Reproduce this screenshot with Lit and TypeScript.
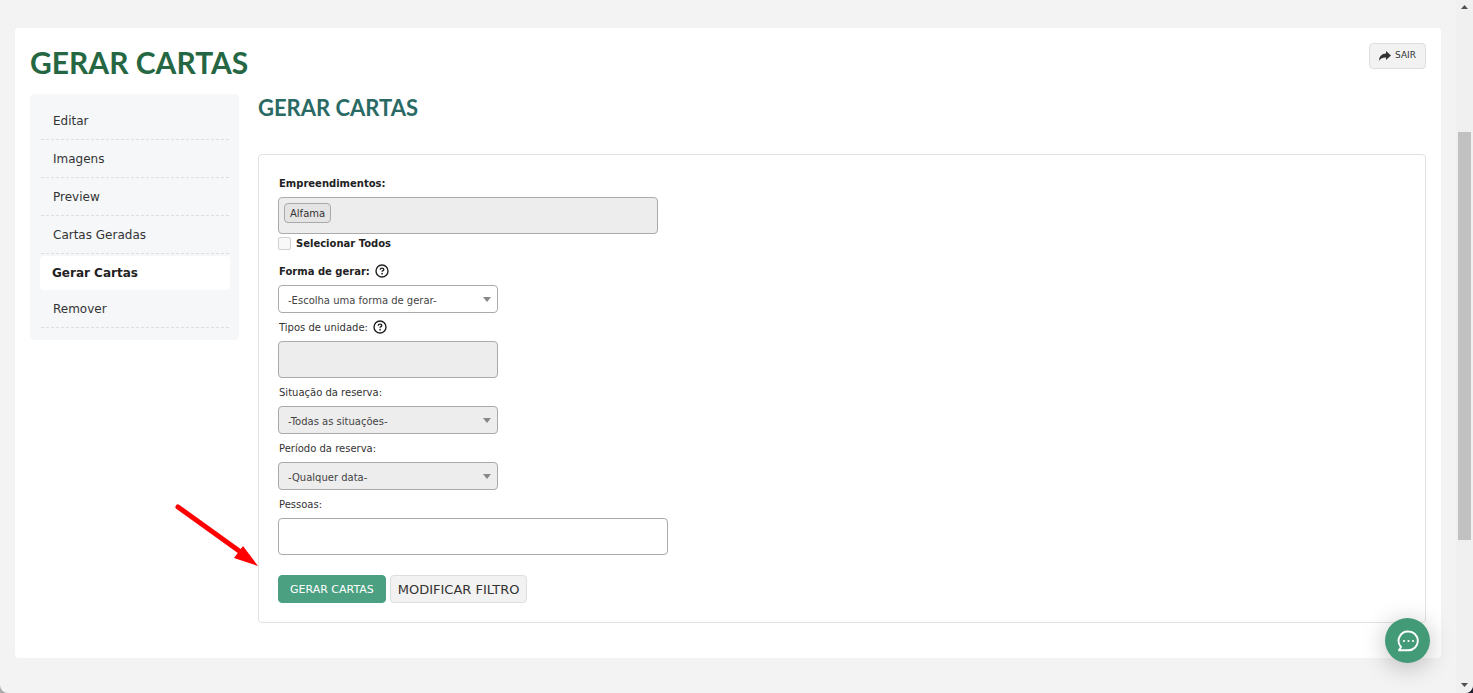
import { LitElement, html, css, svg, nothing } from "lit";
import { customElement, property } from "lit/decorators.js";

const helpIcon = html`<svg class="help" viewBox="0 0 14 14" role="img" aria-label="Ajuda">
  <circle cx="7" cy="7" r="6" fill="none" stroke="#222" stroke-width="1.4" />
  <path d="M5.2 5.7C5.2 4.7 6 4.100 7 4.100s1.800.6 1.800 1.500c0 1.100-1.700 1.100-1.700 2.200" fill="none" stroke="#222" stroke-width="1.4" />
  <circle cx="7.1" cy="9.700" r=".85" fill="#222" />
</svg>`;

@customElement("side-menu")
export class SideMenu extends LitElement {
  @property({ attribute: false }) items: string[] = [];
  @property() current = "";

  static styles = css`
    :host {
      display: block;
      background: #f5f7f9;
      border-radius: 4px;
      padding: 8px 9px 12px 10px;
      box-sizing: border-box;
    }
    .list {
      display: flex;
      flex-direction: column;
      list-style: none;
      margin: 0;
      padding: 0;
    }
    .link {
      display: block;
      margin: 0 1px;
      padding: 1px 12px 0;
      border-bottom: 1px dashed #dcdfe2;
      font-size: 12px;
      line-height: 36px;
      color: #333;
      text-decoration: none;
    }
    .current {
      margin: 2px 0 0;
      padding: 0 12px;
      border: 0;
      border-radius: 4px;
      background: #fff;
      font-weight: bold;
      line-height: 34px;
      color: #222;
    }
  `;

  render() {
    return html`<ul class="list">
      ${this.items.map(
        (item) => html`<li>
          <a
            class="link ${item === this.current ? "current" : ""}"
            href="#"
            aria-current=${item === this.current ? "page" : nothing}
            >${item}</a
          >
        </li>`
      )}
    </ul>`;
  }
}

@customElement("app-root")
export class AppRoot extends LitElement {
  static styles = css`
    :host {
      display: block;
      font-family: Verdana, "DejaVu Sans", sans-serif;
      color: #333;
      background: linear-gradient(to right, #aaa 50%, #223 50%);
    }
    .window {
      display: flex;
      min-height: 100vh;
      background: #f3f3f3;
      border-radius: 0 0 8px 8px;
      overflow: hidden;
    }
    .page {
      flex: 1;
      min-width: 0;
      padding: 28px 15px 35px;
    }
    .panel {
      background: #fff;
      border-radius: 4px;
      padding: 15px 15px 35px;
    }
    .header {
      display: flex;
      justify-content: space-between;
      align-items: flex-start;
      height: 51px;
    }
    .title,
    .subtitle {
      margin: 0;
      font-family: Lato, sans-serif;
      font-weight: bold;
    }
    .title {
      font-size: 30px;
      line-height: 38px;
      color: #266743;
    }
    .subtitle {
      font-size: 22px;
      line-height: 27px;
      padding-bottom: 33px;
      color: #2a6a64;
    }
    .btn {
      box-sizing: border-box;
      border: 1px solid #dedede;
      border-radius: 4px;
      background: #f2f2f2;
      color: #333;
      font-family: inherit;
      font-size: 13px;
      height: 28px;
      padding: 0 7px;
    }
    .exit {
      display: flex;
      align-items: center;
      gap: 4px;
      height: 26px;
      font-size: 9px;
      padding: 0 9px 2px;
    }
    .exit-icon {
      width: 12px;
      height: 10px;
      padding-top: 2px;
    }
    .primary {
      border-color: #4ba081;
      background: #4ba081;
      color: #fff;
      font-size: 11px;
      padding: 0 11px;
    }
    .body {
      display: grid;
      grid-template-columns: 209px minmax(0, 1fr);
      gap: 19px;
      align-items: start;
    }
    .form {
      border: 1px solid #e2e2e2;
      border-radius: 4px;
      padding: 14px 19px 19px;
      font-size: 10px;
    }
    .label {
      display: flex;
      align-items: center;
      gap: 5px;
      height: 28px;
      padding-left: 1px;
    }
    .strong {
      font-weight: bold;
      color: #222;
    }
    .help {
      width: 14px;
      height: 14px;
    }
    .box,
    .select {
      box-sizing: border-box;
      width: 100%;
      border: 1px solid #aaa;
      border-radius: 4px;
      background: #fff;
      font-family: inherit;
      font-size: 10px;
      color: #444;
    }
    .box {
      display: flex;
      align-items: flex-start;
      height: 37px;
      padding: 5px;
    }
    .narrow {
      max-width: 220px;
    }
    .medium {
      max-width: 380px;
    }
    .wide {
      max-width: 390px;
    }
    .off {
      background: #ededed;
    }
    .entry {
      flex: 1;
      min-width: 0;
      border: 0;
      padding: 0;
      background: none;
      font: inherit;
    }
    .chip {
      box-sizing: border-box;
      height: 20px;
      line-height: 19px;
      padding: 0 5px;
      border: 1px solid #aaa;
      border-radius: 4px;
      background: #e4e4e4;
      color: #333;
    }
    .picker {
      display: grid;
      align-items: center;
    }
    .picker > * {
      grid-area: 1 / 1;
    }
    .select {
      appearance: none;
      height: 28px;
      padding: 2px 24px 0 9px;
      opacity: 1;
    }
    .caret {
      justify-self: end;
      width: 8px;
      height: 5px;
      margin-right: 7px;
      pointer-events: none;
    }
    .check-row {
      display: flex;
      align-items: center;
      gap: 5px;
      height: 19px;
      margin-bottom: 4px;
    }
    .check {
      appearance: none;
      box-sizing: border-box;
      width: 13px;
      height: 13px;
      margin: 0;
      border: 1px solid #d0d0d0;
      border-radius: 2px;
      background: #f8f8f8;
    }
    .actions {
      display: flex;
      flex-wrap: wrap;
      gap: 4px;
      margin-top: 20px;
    }
    .scroll {
      display: flex;
      flex-direction: column;
      align-items: center;
      justify-content: space-between;
      width: 17px;
      background: #f0f0f0;
    }
    .track {
      flex: 1;
      display: grid;
      grid-template-rows: 117fr 408fr 138fr;
      width: 13px;
    }
    .thumb {
      grid-row: 2;
      background: #c1c1c1;
    }
    .step {
      width: 7px;
      height: 4px;
      padding: 5px 0 6px;
    }
    .chat {
      position: fixed;
      right: 43px;
      bottom: 30px;
      display: grid;
      place-items: center;
      width: 45px;
      height: 45px;
      border: 0;
      border-radius: 50%;
      padding: 0;
      background: #429a77;
      box-shadow: 0 4px 24px rgba(0, 0, 0, 0.25);
    }
    .chat-icon {
      width: 22px;
      height: 22px;
    }
    .arrow {
      position: absolute;
      left: 174px;
      top: 503px;
      width: 86px;
      height: 65px;
      pointer-events: none;
    }
  `;

  private picker(id: string, label: unknown, option: string, off = false) {
    return html`${label}
      <div class="picker narrow">
        <select class="select ${off ? "off" : ""}" id=${id}>
          <option>${option}</option>
        </select>
        <svg class="caret" viewBox="0 0 8 5" aria-hidden="true">
          <path d="M0 0h8L4 5z" fill="#888" />
        </svg>
      </div>`;
  }

  render() {
    return html`
      <div class="window">
        <div class="page">
          <main class="panel">
            <header class="header">
              <h1 class="title">GERAR CARTAS</h1>
              <button class="btn exit" type="button">
                <svg class="exit-icon" viewBox="0 0 12 10" aria-hidden="true">
                  <path d="M7 0l5 4.400L7 9V6.500C3.800 6.400 1.600 7.100.2 9.800-.2 5.700 2.600 2.500 7 2.400z" fill="#333" />
                </svg>
                SAIR
              </button>
            </header>
            <div class="body">
              <side-menu
                .items=${["Editar", "Imagens", "Preview", "Cartas Geradas", "Gerar Cartas", "Remover"]}
                current="Gerar Cartas"
              ></side-menu>
              <section>
                <h2 class="subtitle">GERAR CARTAS</h2>
                <form class="form" @submit=${(e: Event) => e.preventDefault()}>
                  <label class="label strong" for="places">Empreendimentos:</label>
                  <div class="box medium off">
                    <span class="chip">Alfama</span>
                    <input class="entry" id="places" disabled />
                  </div>
                  <div class="check-row">
                    <input class="check" type="checkbox" id="all" />
                    <label class="strong" for="all">Selecionar Todos</label>
                  </div>
                  ${this.picker(
                    "mode",
                    html`<label class="label strong" for="mode">Forma de gerar: ${helpIcon}</label>`,
                    "-Escolha uma forma de gerar-"
                  )}
                  <label class="label" for="types">Tipos de unidade: ${helpIcon}</label>
                  <input class="box narrow off" id="types" disabled />
                  ${this.picker(
                    "status",
                    html`<label class="label" for="status">Situação da reserva:</label>`,
                    "-Todas as situações-",
                    true
                  )}
                  ${this.picker(
                    "period",
                    html`<label class="label" for="period">Período da reserva:</label>`,
                    "-Qualquer data-",
                    true
                  )}
                  <label class="label" for="people">Pessoas:</label>
                  <input class="box wide" id="people" />
                  <div class="actions">
                    <button class="btn primary" type="submit">GERAR CARTAS</button>
                    <button class="btn" type="button">MODIFICAR FILTRO</button>
                  </div>
                </form>
              </section>
            </div>
          </main>
        </div>
        <div class="scroll" aria-hidden="true">
          <svg class="step" viewBox="0 0 7 4"><path d="M0 4h7L3.500 0z" fill="#505050" /></svg>
          <div class="track"><div class="thumb"></div></div>
          <svg class="step" viewBox="0 0 7 4"><path d="M0 0h7L3.500 4z" fill="#505050" /></svg>
        </div>
      </div>
      <svg class="arrow" viewBox="0 0 86 65" aria-hidden="true">
        <path d="M4 4L68 50" stroke="#f00" stroke-width="5" stroke-linecap="round" />
        <path d="M84 63L60 55 69 43z" fill="#f00" />
      </svg>
      <button class="chat" type="button" aria-label="Chat">
        <svg class="chat-icon" viewBox="0 0 22 22" aria-hidden="true">
          <path
            d="M11.500 1.500a9.300 9.300 0 1 1 0 18.700H2l2-3.200A9.300 9.300 0 0 1 11.500 1.500z"
            fill="none"
            stroke="#fff"
            stroke-width="1.900"
            stroke-linejoin="round"
          />
          ${[7, 11.5, 16].map((x) => svg`<circle cx=${x} cy="11" r="1.100" fill="#fff" />`)}
        </svg>
      </button>
    `;
  }
}
